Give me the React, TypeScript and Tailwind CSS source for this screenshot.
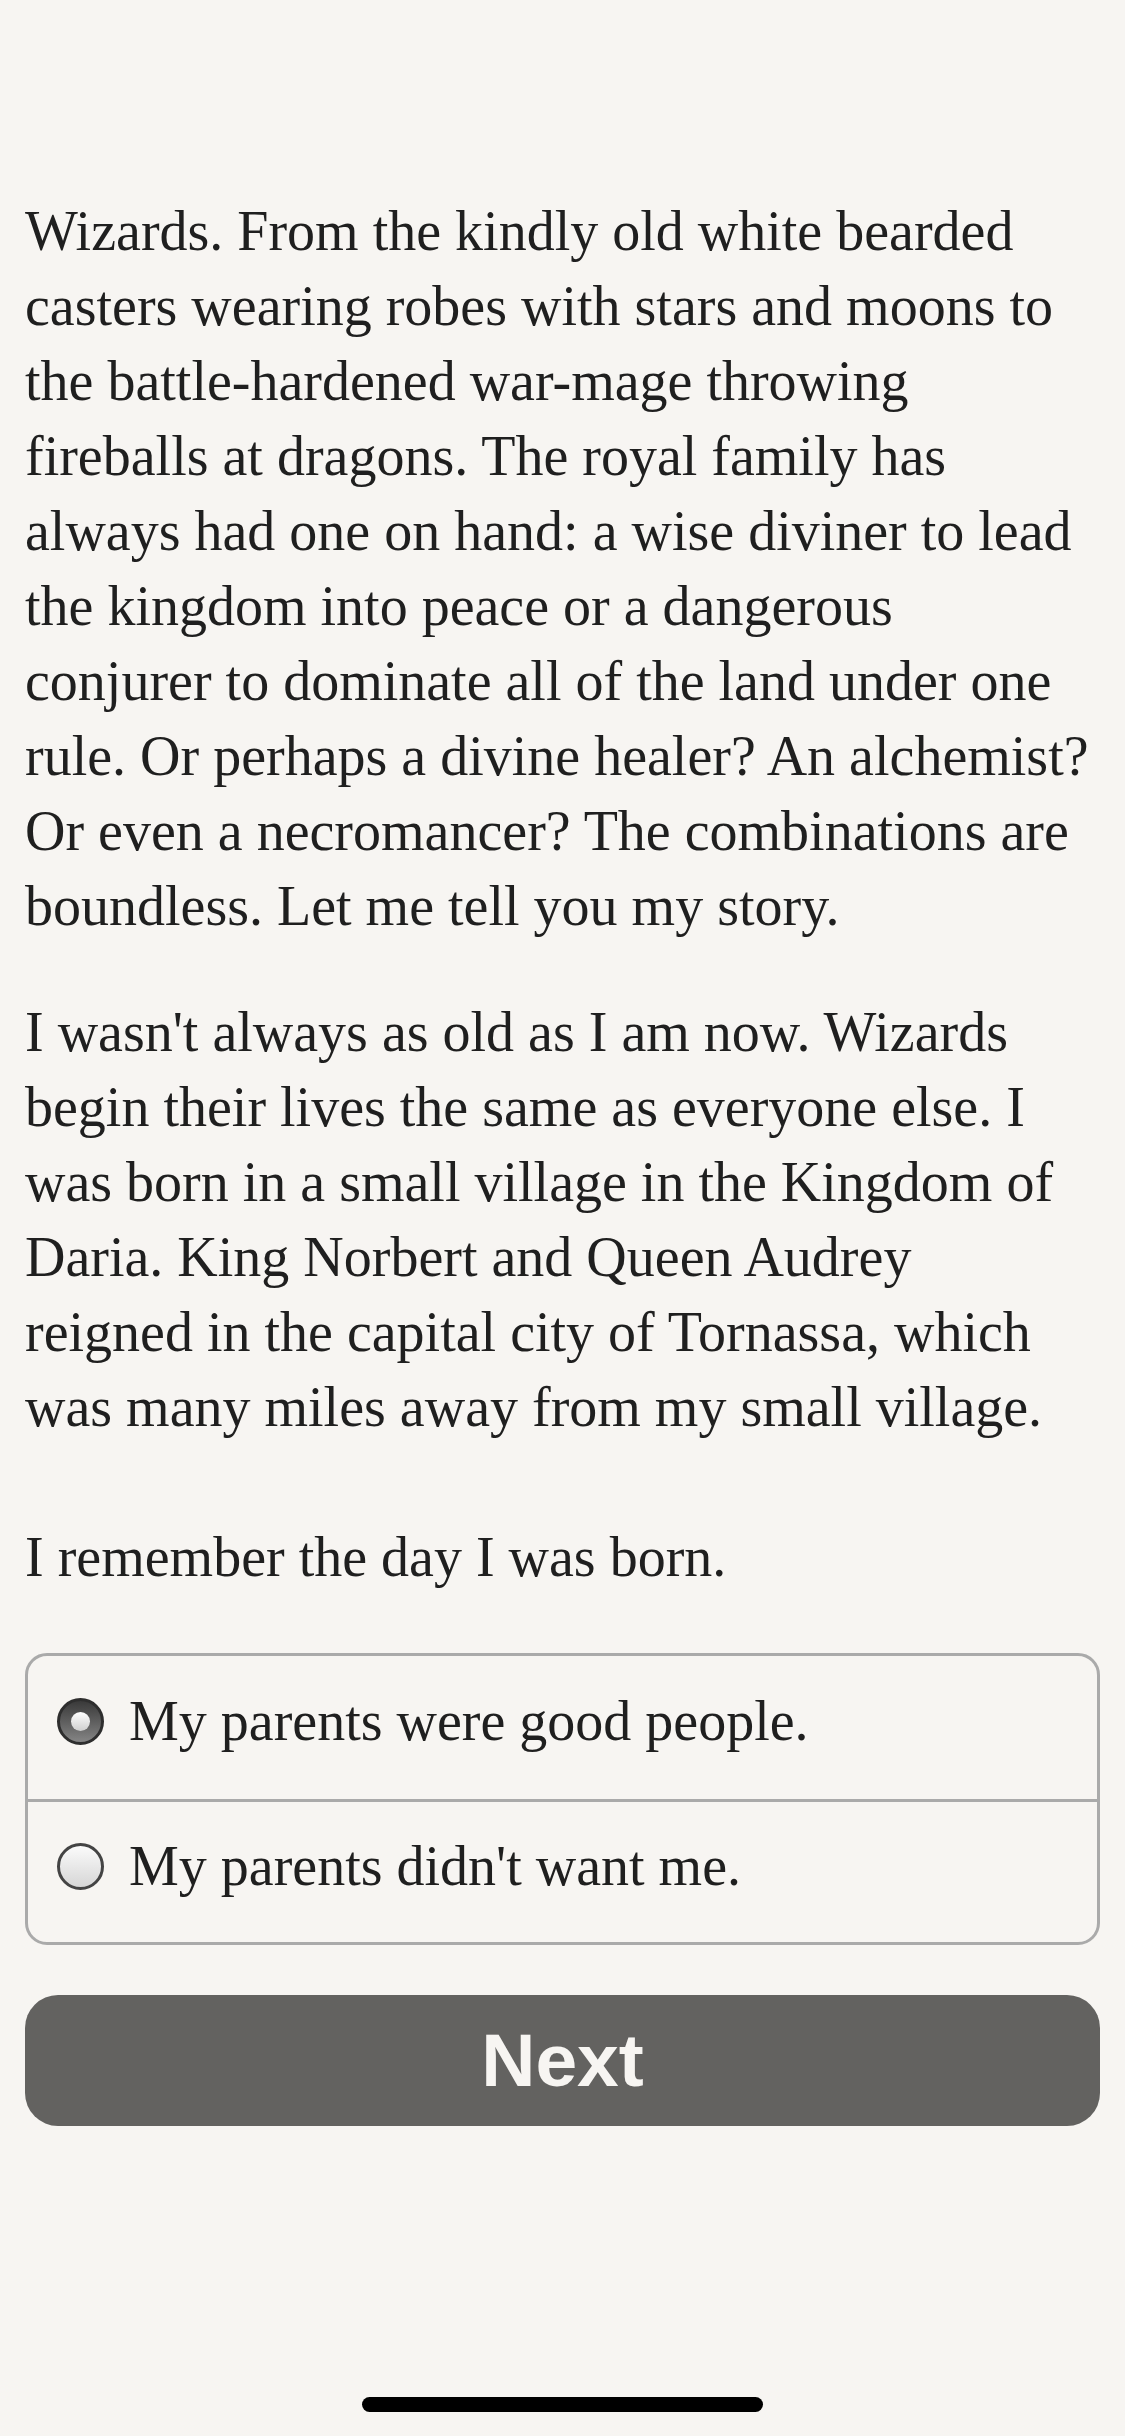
import React from "react";

// Story paragraphs, broken the way the reader app lays them out
const STORY = [
    [
        "Wizards. From the kindly old white bearded",
        "casters wearing robes with stars and moons to",
        "the battle-hardened war-mage throwing",
        "fireballs at dragons. The royal family has",
        "always had one on hand: a wise diviner to lead",
        "the kingdom into peace or a dangerous",
        "conjurer to dominate all of the land under one",
        "rule. Or perhaps a divine healer? An alchemist?",
        "Or even a necromancer? The combinations are",
        "boundless. Let me tell you my story.",
    ],
    [
        "I wasn't always as old as I am now. Wizards",
        "begin their lives the same as everyone else. I",
        "was born in a small village in the Kingdom of",
        "Daria. King Norbert and Queen Audrey",
        "reigned in the capital city of Tornassa, which",
        "was many miles away from my small village.",
    ],
];

const CHOICES = [
    { label: "My parents were good people.", selected: true },
    { label: "My parents didn't want me.", selected: false },
];

function Radio({ selected }: { selected: boolean }) {
    if (selected) {
        return (
            <span className="w-[47px] h-[47px] rounded-full border-[3px] border-[#2e2e2e] bg-gradient-to-b from-[#3a3a3a] to-[#858585] flex items-center justify-center flex-shrink-0">
                <span className="w-[19px] h-[19px] rounded-full bg-gradient-to-b from-[#ffffff] to-[#cfcfcf]" />
            </span>
        );
    }
    return (
        <span className="w-[47px] h-[47px] rounded-full border-[3px] border-[#444] bg-gradient-to-b from-[#fbfbfb] to-[#d6d6d6] flex-shrink-0" />
    );
}

function Para({ lines, className }: { lines: string[]; className?: string }) {
    return (
        <p className={`whitespace-nowrap ${className ?? ""}`}>
            {lines.map((l, i) => (
                <React.Fragment key={i}>
                    {l}
                    {i < lines.length - 1 && <br />}
                </React.Fragment>
            ))}
        </p>
    );
}

export default function App() {
    return (
        <div className="relative min-h-[2436px] bg-[#f7f5f2] text-[#1f1f1f] font-['Liberation_Serif',serif]">
            <main className="px-[25px] pt-[194px]">
                {/* Story text */}
                <div className="text-[56px] leading-[75px]">
                    <Para lines={STORY[0]} className="mb-[51px]" />
                    <Para lines={STORY[1]} className="mb-[75px]" />
                    <p>I remember the day I was born.</p>
                </div>

                {/* Choices */}
                <div className="mt-[58px] border-[3px] border-[#aaaaaa] rounded-[22px] overflow-hidden">
                    {CHOICES.map((c, idx) => (
                        <label key={c.label}
                            className={`h-[143px] flex items-center gap-[25px] pl-[29px] pb-[12px] text-[56px] leading-[75px] ${idx > 0 ? "border-t-[3px] border-[#aaaaaa]" : ""}`}>
                            <Radio selected={c.selected} />
                            <span>{c.label}</span>
                        </label>
                    ))}
                </div>

                {/* Next */}
                <button className="mt-[50px] w-full h-[131px] rounded-[33px] bg-[#636260] text-[#f7f5f2] font-['Liberation_Sans',sans-serif] font-bold text-[75px] leading-none">
                    Next
                </button>
            </main>

            {/* Home indicator */}
            <div className="absolute left-[362px] bottom-[24px] w-[401px] h-[15px] rounded-full bg-black" />
        </div>
    );
}
